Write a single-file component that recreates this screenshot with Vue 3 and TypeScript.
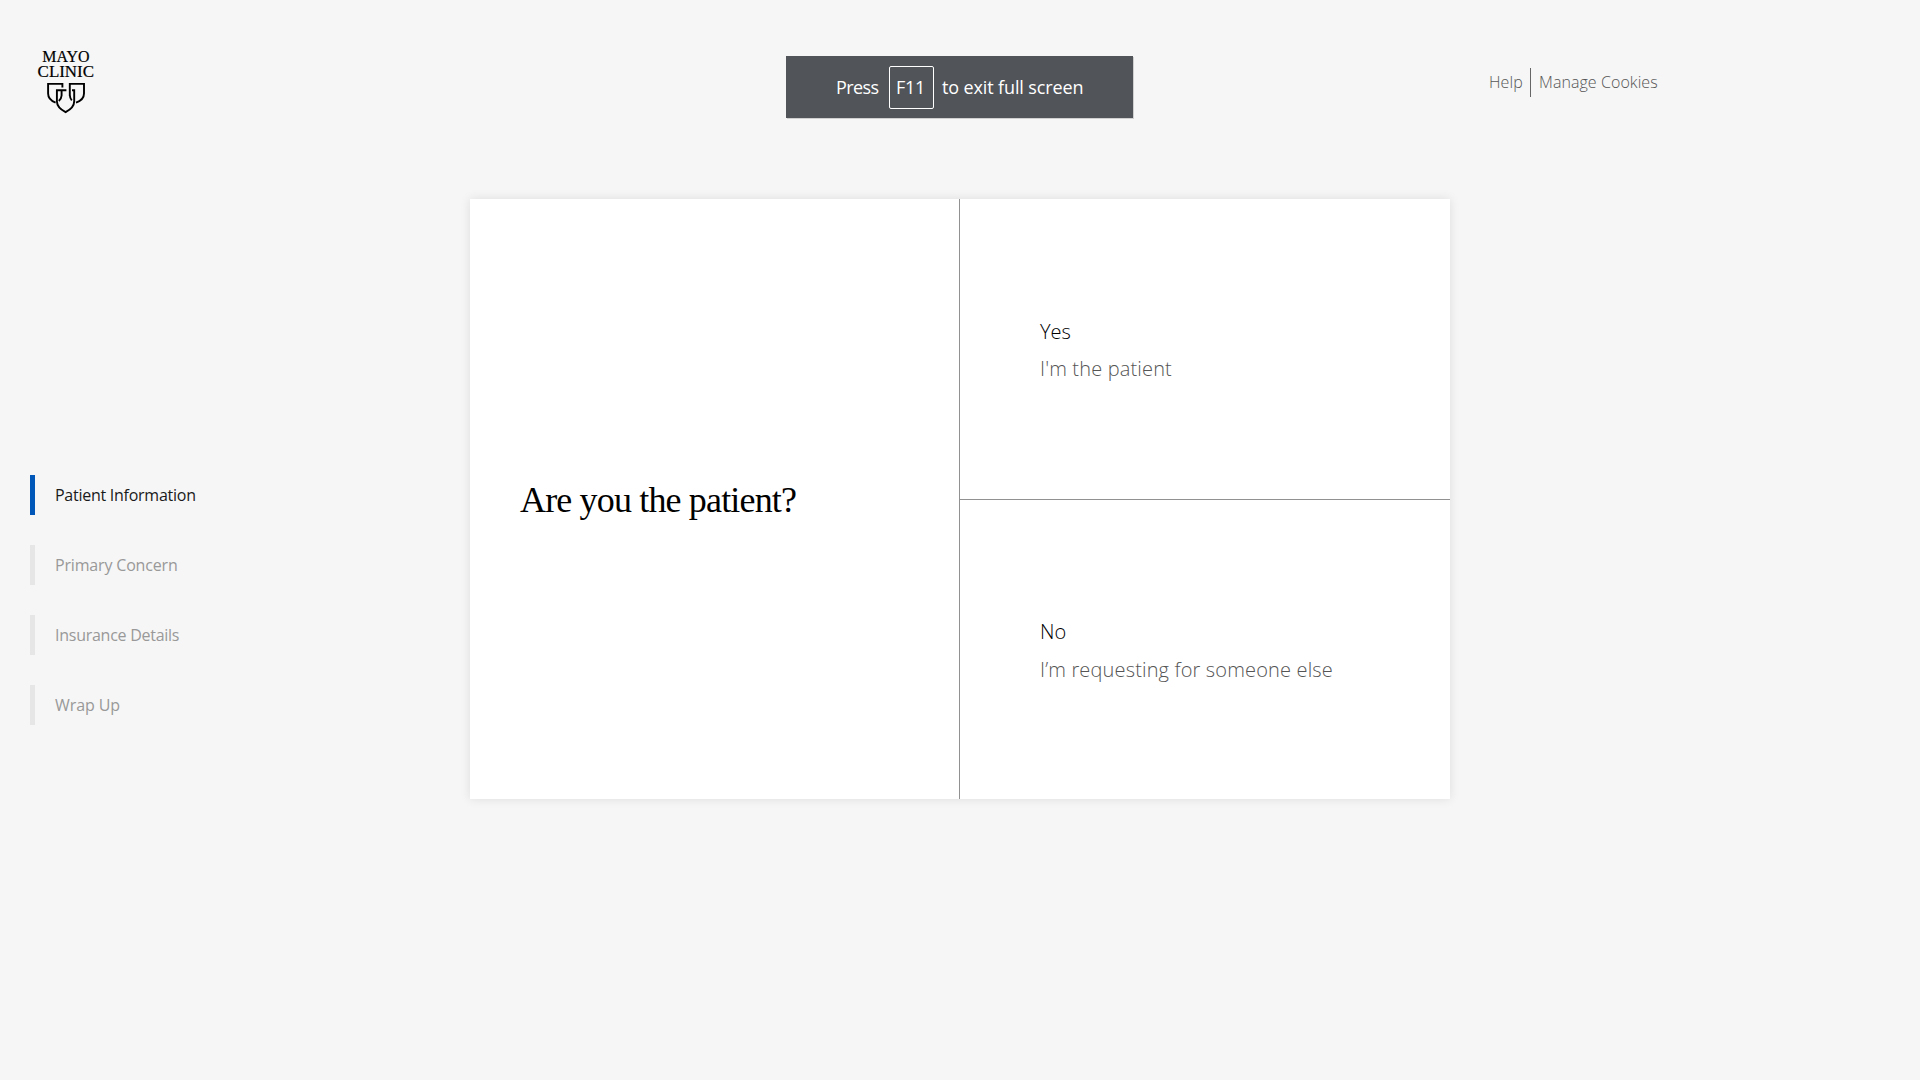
<script setup lang="ts">
interface Step { label: string; active: boolean; spacing: string }
interface Choice { title: string; detail: string; kind: string }

const steps: Step[] = [
  { label: 'Patient Information', active: true, spacing: 'patient' },
  { label: 'Primary Concern', active: false, spacing: 'concern' },
  { label: 'Insurance Details', active: false, spacing: 'insurance' },
  { label: 'Wrap Up', active: false, spacing: 'wrap' },
]

const choices: Choice[] = [
  { title: 'Yes', detail: "I'm the patient", kind: 'yes' },
  { title: 'No', detail: 'I’m requesting for someone else', kind: 'no' },
]
</script>

<template>
  <div class="page">
    <header class="header">
      <svg class="logo" width="60" height="76" viewBox="0 -10 60 76" role="img" aria-label="Mayo Clinic">
        <g class="wordmark">
          <text x="5.3" y="11.9" textLength="47.2" lengthAdjust="spacingAndGlyphs">MAYO</text>
          <text x="0.6" y="26.7" textLength="56.4" lengthAdjust="spacingAndGlyphs">CLINIC</text>
        </g>
        <g fill="none" stroke="#000" stroke-width="1.9" stroke-linejoin="miter">
          <path d="M25.4 37.4V33.9H11.1V43.5C11.1 48 13.8 50.8 18.6 52.6" />
          <path d="M32.8 46V33.9H47V43.5C47 48 44.2 50.8 39 52.6M32.8 45Q33 48.4 34.8 50.4" />
          <path d="M29.4 40.2H19.9V51.2C19.9 56.6 23.4 59.4 28.6 62.1C33.8 59.4 37.2 56.6 37.2 51.2V40.2H35M24.6 40.2V45.5Q24.4 48.8 21.8 50.9" />
        </g>
      </svg>
      <nav class="links">
        <a class="help">Help</a>
        <a class="cookies">Manage Cookies</a>
      </nav>
    </header>

    <div class="toast">
      <span class="press">Press</span>
      <kbd>F11</kbd>
      <span class="exit">to exit full screen</span>
    </div>

    <div class="body">
      <ol class="steps">
        <li v-for="step in steps" :key="step.label" :class="{ active: step.active }">
          <span :class="step.spacing">{{ step.label }}</span>
        </li>
      </ol>
      <main class="card">
        <section class="question"><h1>Are you the patient?</h1></section>
        <section class="choices">
          <button v-for="choice in choices" :key="choice.title" type="button" :class="choice.kind">
            <span class="title">{{ choice.title }}</span>
            <span class="detail">{{ choice.detail }}</span>
          </button>
        </section>
      </main>
    </div>
  </div>
</template>

<style>
body { background: #f6f6f6; overflow: hidden; }
</style>

<style scoped>
.page { width: 1920px; height: 1080px; background: #f6f6f6; font-family: "Open Sans", "Noto Sans", sans-serif; }
.header { box-sizing: border-box; height: 199px; padding: 40px 263px 0 37px; display: flex; justify-content: space-between; align-items: flex-start; }
.logo { overflow: visible; }
.wordmark { font: 16px "Liberation Serif", serif; fill: #000; stroke: #000; stroke-width: 0.2px; }
.links { display: flex; width: 168px; margin: 28px 0 0; height: 29px; line-height: 29px; font-size: 16px; font-weight: 300; color: #555; white-space: nowrap; }
.help { box-sizing: border-box; flex: none; width: 42px; height: 29px; border-right: 1px solid #666; letter-spacing: 0.1px; }
.cookies { padding-left: 8px; flex: none; letter-spacing: 0.07px; }
.toast { position: absolute; left: 786px; top: 56px; box-sizing: border-box; width: 347px; height: 62px; padding-left: 50px; display: flex; align-items: center; background: #515459; color: #fff; font-size: 18px; box-shadow: 1px 1px 0 #d0d0d1; white-space: nowrap; }
.press { width: 53px; letter-spacing: -0.6px; }
kbd { box-sizing: border-box; width: 45px; height: 43px; padding-right: 2px; border: 1px solid #fff; border-radius: 2px; font: inherit; line-height: 41px; text-align: center; letter-spacing: -0.3px; }
.exit { margin-left: 8px; letter-spacing: -0.13px; }
.body { display: flex; align-items: flex-start; }
.steps { box-sizing: border-box; width: 470px; margin: 276px 0 0; padding: 0 0 0 30px; list-style: none; display: flex; flex-direction: column; gap: 30px; }
.steps li { height: 40px; line-height: 40px; border-left: 5px solid #e6e6e6; padding-left: 20px; color: #999; font-size: 16px; }
.steps li.active { border-color: #0057b8; color: #1a1a1a; }
.patient { letter-spacing: -0.26px; }
.concern { letter-spacing: -0.17px; }
.insurance { letter-spacing: -0.26px; }
.wrap { letter-spacing: -0.08px; }
.card { width: 980px; height: 600px; display: flex; background: #fff; box-shadow: 0 0 10px rgba(0, 0, 0, 0.1); }
.question { box-sizing: border-box; width: 489px; padding: 2px 0 0 50px; display: flex; align-items: center; }
h1 { margin: 0; font: 400 36px/48px "Liberation Serif", serif; color: #000; letter-spacing: -0.84px; white-space: nowrap; }
.choices { flex: 1; display: flex; flex-direction: column; border-left: 1px solid #919191; }
button { box-sizing: border-box; flex: 1; padding: 4px 0 0 80px; border: 0; background: none; display: flex; flex-direction: column; justify-content: center; align-items: flex-start; gap: 8px; font: 300 20px/30px "Open Sans", "Noto Sans", sans-serif; color: #000; white-space: nowrap; }
button.yes { border-bottom: 1px solid #919191; gap: 7px; }
.detail { color: #555; letter-spacing: 0.155px; }
</style>
